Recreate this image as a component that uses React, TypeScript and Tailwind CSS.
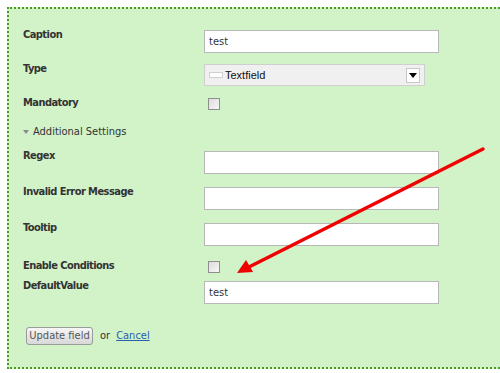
import React from "react";

const font = { fontFamily: "'DejaVu Sans Condensed', 'DejaVu Sans', 'Liberation Sans', sans-serif" };

function Label({ children }: { children: React.ReactNode }) {
  return (
    <div className="w-[181px] shrink-0 text-[11px] leading-[13px] font-bold tracking-[-0.55px] text-[#333]">
      {children}
    </div>
  );
}

function TextInput({ value = "" }: { value?: string }) {
  return (
    <div className="mt-[2px] h-[23px] w-[235px] border border-[#b8b8b8] bg-white pl-[4px] text-[11px] leading-[21px] text-[#333]">
      {value}
    </div>
  );
}

function Checkbox() {
  return (
    <div className="mt-[2px] ml-[4px] h-[12px] w-[12px] border border-[#8f8f8f] bg-gradient-to-br from-[#dcdcdc] to-[#f7f7f7]" />
  );
}

function Row({ label, children, className = "" }: { label: string; children: React.ReactNode; className?: string }) {
  return (
    <div className={"flex items-start " + className}>
      <Label>{label}</Label>
      {children}
    </div>
  );
}

export default function App() {
  return (
    <div className="relative h-[373px] w-[500px] overflow-hidden bg-white" style={font}>
      <div className="ml-[7px] mt-[7px] w-[520px] border-2 border-dotted border-[#4a9a24] bg-[#d2f2c8] pl-[14px] pt-[19px] pb-[22px]">
        <Row label="Caption">
          <TextInput value="test" />
        </Row>

        <Row label="Type" className="mt-[9px]">
          <div className="mt-[2px] flex h-[22px] w-[221px] items-center border border-[#cfcfcf] bg-[#f0f0f0] pl-[4px] pr-[4px]">
            <span className="h-[6px] w-[14px] border border-[#d0d0d0] bg-white" />
            <span className="ml-[2px] text-[11px] text-[#111]" style={{ fontFamily: "'Liberation Sans', sans-serif" }}>
              Textfield
            </span>
            <span className="ml-auto flex h-[15px] w-[14px] items-center justify-center border border-[#c8c8c8] bg-white">
              <svg width="8" height="5" viewBox="0 0 8 5">
                <path d="M0 0h8L4 5z" fill="#000" />
              </svg>
            </span>
          </div>
        </Row>

        <Row label="Mandatory" className="mt-[10px] h-[14px]">
          <Checkbox />
        </Row>

        <div className="mt-[15px] flex h-[13px] items-center text-[11px] leading-[13px] text-[#333]">
          <svg width="6" height="4" viewBox="0 0 6 4" className="mr-[4px]">
            <path d="M0 0h6L3 4z" fill="#8a8a8a" />
          </svg>
          Additional Settings
        </div>

        <Row label="Regex" className="mt-[11px]">
          <TextInput />
        </Row>

        <Row label="Invalid Error Message" className="mt-[11px]">
          <TextInput />
        </Row>

        <Row label="Tooltip" className="mt-[11px]">
          <TextInput />
        </Row>

        <Row label="Enable Conditions" className="mt-[13px] h-[14px]">
          <Checkbox />
        </Row>

        <Row label="DefaultValue" className="mt-[6px]">
          <TextInput value="test" />
        </Row>

        <div className="mt-[23px] ml-[3px] flex items-center text-[11px] text-[#333]">
          <button className="h-[18px] w-[67px] rounded-[3px] border border-[#9a9a9a] bg-gradient-to-b from-[#f6f6f6] to-[#d8d8d8] text-[11px] leading-[16px] text-[#555]">
            Update field
          </button>
          <span className="ml-[7px]">or</span>
          <a href="#" className="ml-[6px] text-[#2a5db0] underline">
            Cancel
          </a>
        </div>
      </div>

      <svg className="pointer-events-none absolute left-0 top-0" width="500" height="373">
        <line x1="483" y1="149" x2="247" y2="268" stroke="#f00000" strokeWidth="3.5" strokeLinecap="round" />
        <polygon points="237,273 253,272 246,260" fill="#f00000" />
      </svg>
    </div>
  );
}
